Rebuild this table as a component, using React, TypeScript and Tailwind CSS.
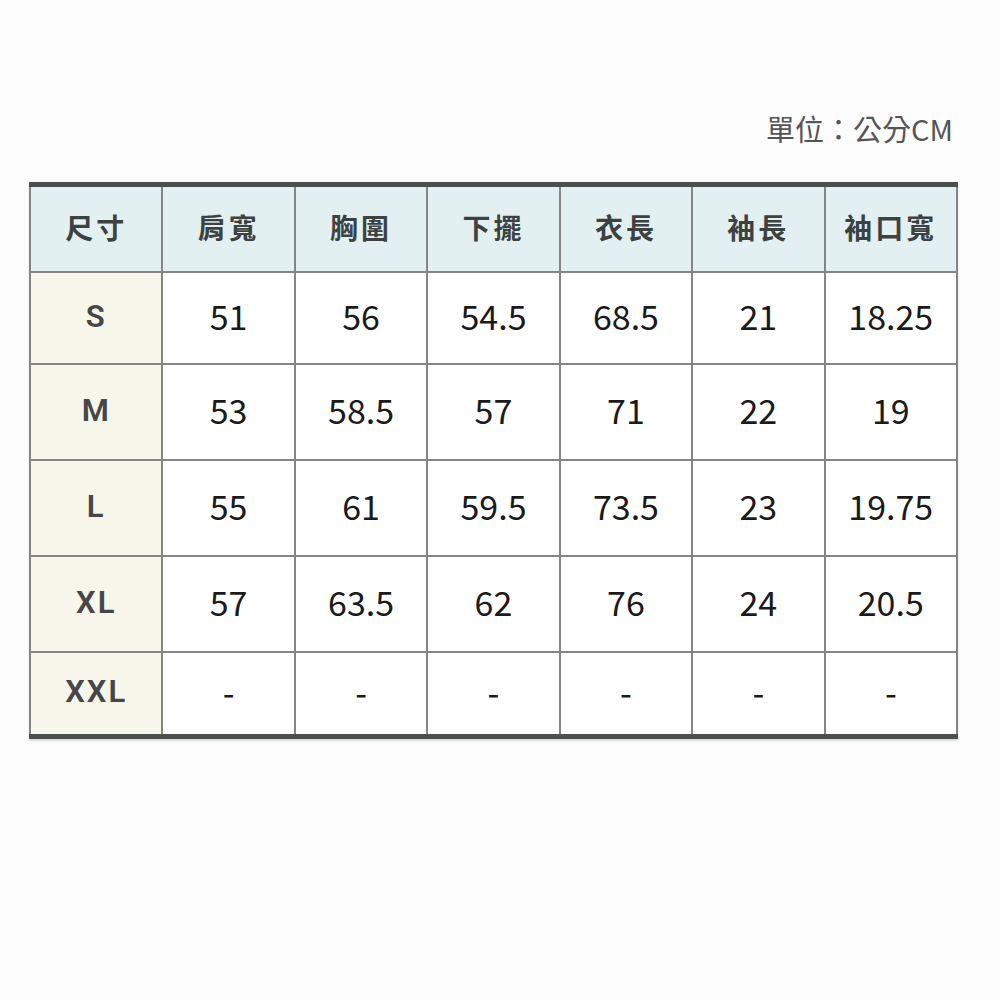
const headers = ['尺寸', '肩寬', '胸圍', '下擺', '衣長', '袖長', '袖口寬'];

const rows = [
  { size: 'S', h: 'h-[90px]', values: ['51', '56', '54.5', '68.5', '21', '18.25'] },
  { size: 'M', h: 'h-[94px]', values: ['53', '58.5', '57', '71', '22', '19'] },
  { size: 'L', h: 'h-[94px]', values: ['55', '61', '59.5', '73.5', '23', '19.75'] },
  { size: 'XL', h: 'h-[94px]', values: ['57', '63.5', '62', '76', '24', '20.5'] },
  { size: 'XXL', h: 'h-[81px]', values: ['-', '-', '-', '-', '-', '-'] },
];

export default function App() {
  return (
    <div
      className="w-[1000px] h-[1000px] bg-[#fdfdfd] pt-[107px] pl-[29px] pr-[42px]"
      style={{ fontFamily: '"Noto Sans CJK TC", "Noto Sans", sans-serif' }}
    >
      <div className="flex justify-end pr-[5px] h-[42px] text-[29px] leading-[42px] text-[#555555]">
        單位：公分CM
      </div>

      <div className="mt-[33px] border-t-[5px] border-b-[5px] border-[#4b504f] bg-[#858585] px-[2px] grid grid-cols-7 gap-[2px] shadow-[0_2px_2px_rgba(0,0,0,0.15)]">
        {headers.map((h) => (
          <div
            key={h}
            className="h-[84px] pb-[4px] bg-[#e3f0f2] flex items-center justify-center text-[28px] font-bold tracking-[3px] text-[#3c4241]"
          >
            {h}
          </div>
        ))}

        {rows.map((r) => (
          <>
            <div
              key={r.size}
              className={`${r.h} pb-[2px] bg-[#f7f6eb] flex items-center justify-center text-[31px] font-semibold tracking-[2px] text-[#474747]`}
              style={{ fontFamily: 'Roboto, "Noto Sans", sans-serif' }}
            >
              {r.size}
            </div>
            {r.values.map((v, i) => (
              <div
                key={r.size + i}
                className={`${r.h} pb-[5px] bg-white flex items-center justify-center text-[34px] text-[#1a1a1a]`}
              >
                {v}
              </div>
            ))}
          </>
        ))}
      </div>
    </div>
  );
}
